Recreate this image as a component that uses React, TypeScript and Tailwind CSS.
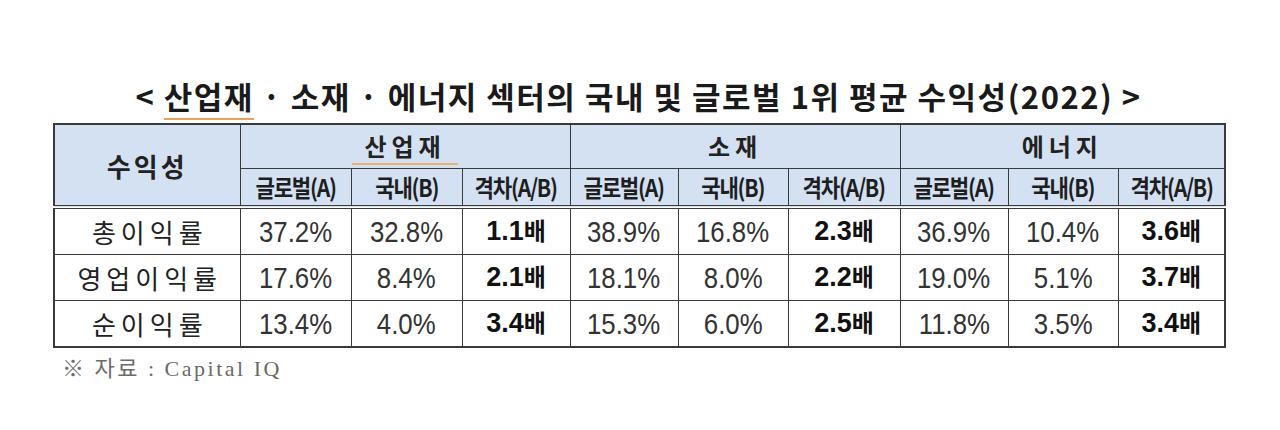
import React from "react";

type Row = { label: string; vals: string[] };

const rows: Row[] = [
  { label: "총이익률", vals: ["37.2%", "32.8%", "1.1배", "38.9%", "16.8%", "2.3배", "36.9%", "10.4%", "3.6배"] },
  { label: "영업이익률", vals: ["17.6%", "8.4%", "2.1배", "18.1%", "8.0%", "2.2배", "19.0%", "5.1%", "3.7배"] },
  { label: "순이익률", vals: ["13.4%", "4.0%", "3.4배", "15.3%", "6.0%", "2.5배", "11.8%", "3.5%", "3.4배"] },
];

const rowH = ["h-[45px]", "h-[44px]", "h-[43px]"];

const kr = "font-['Noto_Sans_CJK_KR','Noto_Sans',sans-serif]";
const num = "font-['Liberation_Sans','Noto_Sans_CJK_KR',sans-serif]";
const cell = "border-[1.5px] border-[#3a3a3a]";

function Val({ v }: { v: string }) {
  if (v.endsWith("배")) {
    return (
      <span className={`inline-block font-bold text-[#111] ${num}`}>
        <span className="text-[27px]">{v.slice(0, -1)}</span>
        <span className={`text-[24px] ${kr}`}>배</span>
      </span>
    );
  }
  return (
    <span className={`inline-block text-[30px] text-[#333] scale-x-[0.86] ${num}`}>{v}</span>
  );
}

function Sub({ t }: { t: string }) {
  return (
    <span
      className={`inline-block text-[24px] font-bold text-[#1e1e1e] tracking-[-0.06em] scale-x-[0.88] ${kr}`}
    >
      {t}
    </span>
  );
}

export default function App() {
  const subs = ["글로벌(A)", "국내(B)", "격차(A/B)"];
  return (
    <div className="w-[1280px] h-[430px] bg-white pt-[76px] pl-[53px]">
      <div className="w-[1171px] flex flex-col">
        <h1
          className={`text-center text-[31px] font-bold leading-[40px] tracking-[1.5px] text-[#1a1a1a] h-[47px] ${kr}`}
        >
          {"< "}
          <span className="border-b-2 border-[#e8a25a]">산업재</span>
          {" · 소재 · 에너지 섹터의 국내 및 글로벌 1위 평균 수익성(2022) >"}
        </h1>
        <table className="border-collapse table-fixed w-[1171px] border-2 border-[#3a3a3a]">
          <colgroup>
            <col className="w-[186px]" />
            <col className="w-[111px]" />
            <col className="w-[111px]" />
            <col className="w-[108px]" />
            <col className="w-[108px]" />
            <col className="w-[110px]" />
            <col className="w-[112px]" />
            <col className="w-[108px]" />
            <col className="w-[110px]" />
            <col className="w-[107px]" />
          </colgroup>
          <thead>
            <tr className="h-[44px] bg-[#d3e1f3]">
              <th
                rowSpan={2}
                className={`${cell} border-b-[4px] border-double text-[26px] font-bold tracking-[3px] text-[#222] ${kr}`}
              >
                수익성
              </th>
              {["산업재", "소재", "에너지"].map((s, i) => (
                <th
                  key={s}
                  colSpan={3}
                  className={`${cell} text-[24px] font-bold tracking-[5px] text-[#222] ${kr}`}
                >
                  {i === 0 ? <span className="border-b-2 border-[#eab07a] px-3">{s}</span> : s}
                </th>
              ))}
            </tr>
            <tr className="h-[39px] bg-[#d3e1f3]">
              {[0, 1, 2].flatMap((g) =>
                subs.map((t) => (
                  <th key={g + t} className={`${cell} border-b-[4px] border-double font-normal p-0`}>
                    <Sub t={t} />
                  </th>
                ))
              )}
            </tr>
          </thead>
          <tbody>
            {rows.map((r, ri) => (
              <tr key={r.label} className={rowH[ri]}>
                <td
                  className={`${cell} text-center text-[26px] tracking-[5px] text-[#222] pl-[5px] ${kr}`}
                >
                  {r.label}
                </td>
                {r.vals.map((v, vi) => (
                  <td key={vi} className={`${cell} text-center p-0`}>
                    <Val v={v} />
                  </td>
                ))}
              </tr>
            ))}
          </tbody>
        </table>
        <div
          className="mt-[3px] pl-[9px] text-[22px] leading-[30px] text-[#6a6a6a] tracking-[2.5px] font-['Liberation_Serif','Noto_Sans_CJK_KR',serif]"
        >
          ※ <span className={kr}>자료</span> : Capital IQ
        </div>
      </div>
    </div>
  );
}
